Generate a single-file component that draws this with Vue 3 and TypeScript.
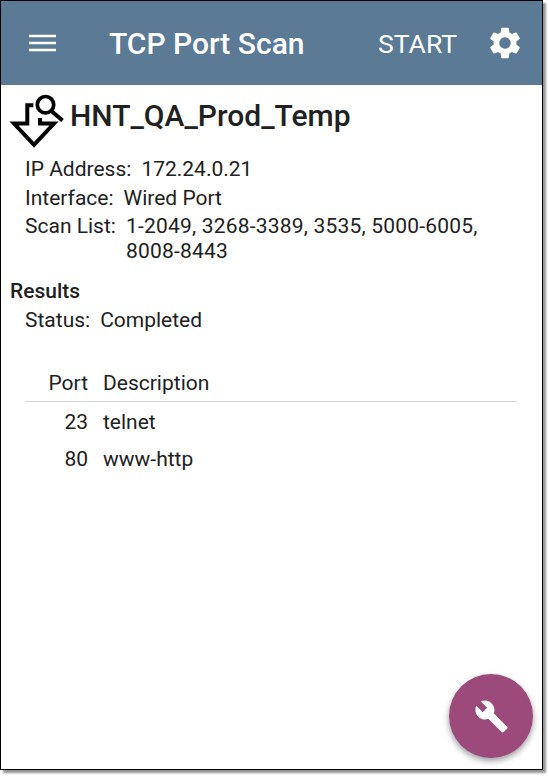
<script setup lang="ts">
const rows = [
  { port: '23', desc: 'telnet' },
  { port: '80', desc: 'www-http' },
]
</script>

<template>
  <div class="page">
    <div class="frame">
      <header class="bar">
        <svg class="menu" width="30" height="20" viewBox="0 0 30 20">
          <path d="M1 3h27M1 10h27M1 17h27" stroke="#fff" stroke-width="2.4" fill="none" />
        </svg>
        <div class="title">TCP Port Scan</div>
        <div class="start">START</div>
        <svg class="gear" width="38" height="38" viewBox="0 0 24 24">
          <path fill="#fff" d="M19.14 12.94c.04-.3.06-.61.06-.94 0-.32-.02-.64-.07-.94l2.03-1.58a.49.49 0 0 0 .12-.61l-1.92-3.32a.488.488 0 0 0-.59-.22l-2.39.96c-.5-.38-1.03-.7-1.62-.94l-.36-2.54a.484.484 0 0 0-.48-.41h-3.84c-.24 0-.43.17-.47.41l-.36 2.54c-.59.24-1.13.57-1.62.94l-2.39-.96c-.22-.08-.47 0-.59.22L2.74 8.87c-.12.21-.08.47.12.61l2.03 1.58c-.05.3-.09.63-.09.94s.02.64.07.94l-2.03 1.58a.49.49 0 0 0-.12.61l1.92 3.32c.12.22.37.29.59.22l2.39-.96c.5.38 1.03.7 1.62.94l.36 2.54c.05.24.24.41.48.41h3.84c.24 0 .44-.17.47-.41l.36-2.54c.59-.24 1.13-.56 1.62-.94l2.39.96c.22.08.47 0 .59-.22l1.92-3.32c.12-.22.07-.47-.12-.61l-2.01-1.58zM12 15.6c-1.98 0-3.6-1.62-3.6-3.6s1.62-3.6 3.6-3.6 3.6 1.62 3.6 3.6-1.62 3.6-3.6 3.6z" />
        </svg>
      </header>
      <main class="content">
        <div class="heading">
          <svg class="scan-icon" width="56" height="56" viewBox="0 0 56 56">
            <circle cx="37.500" cy="12.700" r="8.200" fill="none" stroke="#000" stroke-width="3.700" />
            <path d="M44 19.500l10.500 9" stroke="#000" stroke-width="4" fill="none" />
            <path d="M25.300 13.300H19.300V31.500H6L26 52.800L46 31.500H32V26" fill="none" stroke="#000" stroke-width="4" />
          </svg>
          <h1>HNT_QA_Prod_Temp</h1>
        </div>
        <section class="info">
          <div class="line"><span class="lab">IP Address:</span><span>172.24.0.21</span></div>
          <div class="line"><span class="lab">Interface:</span><span>Wired Port</span></div>
          <div class="line"><span class="lab">Scan List:</span><span class="list">1-2049, 3268-3389, 3535, 5000-6005, 8008-8443</span></div>
        </section>
        <h2>Results</h2>
        <div class="info">
          <div class="line"><span class="lab">Status:</span><span>Completed</span></div>
        </div>
        <div class="table">
          <div class="row head"><span class="port">Port</span><span>Description</span></div>
          <div v-for="r in rows" :key="r.port" class="row"><span class="port">{{ r.port }}</span><span>{{ r.desc }}</span></div>
        </div>
      </main>
      <button class="fab" type="button" aria-label="Tools">
        <svg width="35" height="35" viewBox="0 0 24 24">
          <path fill="#fff" d="M22.700 19l-9.100-9.100c.9-2.300.4-5-1.500-6.900-2-2-5-2.400-7.400-1.300L9 6 6 9 1.600 4.700C.4 7.100.9 10.100 2.900 12.100c1.900 1.900 4.600 2.400 6.900 1.500l9.100 9.100c.4.4 1 .4 1.400 0l2.300-2.300c.5-.4.500-1.100.100-1.400z" />
        </svg>
      </button>
    </div>
  </div>
</template>

<style>
html, body { margin: 0; background: #fff; }
</style>

<style scoped>
.page {
  width: 549px;
  height: 776px;
  overflow: hidden;
  background: #fff;
  box-sizing: border-box;
  padding: 0 6px 6px 0;
}
.frame {
  position: relative;
  height: 100%;
  box-sizing: border-box;
  border: 1px solid #000;
  box-shadow: 3px 3px 2px rgba(0, 0, 0, 0.42);
  background: #fff;
  font-family: Roboto, "Liberation Sans", sans-serif;
  color: #212121;
  font-size: 21px;
  display: flex;
  flex-direction: column;
}
.bar {
  height: 84px;
  flex: none;
  background: #5a7a96;
  color: #fff;
  display: flex;
  align-items: center;
}
.menu { margin-left: 27px; flex: none; }
.title { margin-left: 51px; font-size: 30px; font-weight: 500; flex: 1; }
.start { font-size: 26.500px; margin-right: 29px; }
.gear { margin-right: 18px; flex: none; }
.content { flex: 1; }
.heading { display: flex; align-items: flex-start; height: 70px; }
.scan-icon { margin: 7px 0 0 7px; flex: none; }
h1 { margin: 11px 0 0 6px; font-size: 30px; line-height: 40px; font-weight: 500; }
.info { margin-left: 24px; }
.line { display: flex; line-height: 28.500px; }
.lab { margin-right: 10px; flex: none; }
.list { width: 365px; line-height: 25px; padding-top: 2px; letter-spacing: 0.2px; }
h2 { margin: 13px 0 1px 9px; font-size: 21px; line-height: 28px; font-weight: 500; }
.table { margin: 30px 25px 0 24px; }
.row { display: flex; line-height: 37px; }
.head { border-bottom: 1px solid #d8d8d8; line-height: 36px; margin-bottom: 2px; }
.port { width: 63px; text-align: right; margin-right: 15px; flex: none; }
.fab {
  position: absolute;
  right: 9px;
  bottom: 11px;
  width: 84px;
  height: 84px;
  padding: 0;
  border: none;
  border-radius: 50%;
  background: #9c4a7c;
  box-shadow: 0 3px 6px rgba(0, 0, 0, 0.4);
  display: flex;
  align-items: center;
  justify-content: center;
}
</style>
